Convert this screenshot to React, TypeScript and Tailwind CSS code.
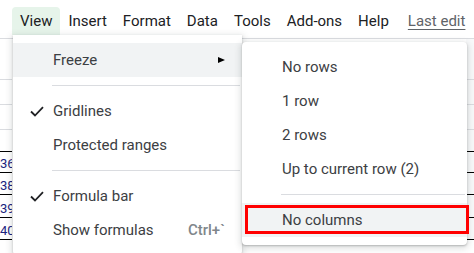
import React from "react";

const font = { fontFamily: "Roboto, 'Noto Sans', Arial, sans-serif" };

const MenuBar: React.FC = () => {
    const items = ["Insert", "Format", "Data", "Tools", "Add-ons", "Help"];
    return (
        <div className="flex items-end h-[35px] pl-[12px] text-[15px] text-[#202124]">
            <div className="h-[28px] px-2 flex items-center bg-[#e6f4ea] rounded-t-[4px]">View</div>
            {items.map((it) => (
                <div key={it} className="h-[28px] px-2 flex items-center">{it}</div>
            ))}
            <div className="h-[28px] ml-[11px] flex items-center text-[#5f6368] underline underline-offset-[3px]">Last edit</div>
        </div>
    );
};

const Check: React.FC = () => (
    <svg width="14" height="11" viewBox="0 0 14 11" className="absolute left-[17px] top-[12px]">
        <path d="M1 5.5 L5 9.5 L13 1.2" fill="none" stroke="#202124" strokeWidth="1.8" />
    </svg>
);

type Item = { label: string; checked?: boolean; arrow?: boolean; shortcut?: string; active?: boolean };

const Row: React.FC<{ item: Item }> = ({ item }) => (
    <div className={`relative h-[34px] flex items-center pl-[40px] pr-[16px] text-[15px] text-[#3c4043] ${item.active ? "bg-[#f1f3f4]" : ""}`}>
        {item.checked && <Check />}
        <span className="flex-1">{item.label}</span>
        {item.arrow && (
            <svg width="7" height="6" viewBox="0 0 7 6" className="mr-[1px]">
                <path d="M0 0 L7 3 L0 6 Z" fill="#000" />
            </svg>
        )}
        {item.shortcut && <span className="text-[#80868b] font-medium mr-[1px]">{item.shortcut}</span>}
    </div>
);

const Sep: React.FC = () => (
    <div className="my-[8px] ml-[39px] mr-[2px] h-px bg-[#dadce0]" />
);

const ViewMenu: React.FC = () => (
    <div className="absolute left-[13px] top-[35px] w-[229px] bg-white pt-[8px] pb-[8px] rounded-b-[4px] shadow-[0_2px_6px_2px_rgba(60,64,67,0.15),0_1px_2px_rgba(60,64,67,0.3)]">
        <Row item={{ label: "Freeze", arrow: true, active: true }} />
        <Sep />
        <Row item={{ label: "Gridlines", checked: true }} />
        <Row item={{ label: "Protected ranges" }} />
        <Sep />
        <Row item={{ label: "Formula bar", checked: true }} />
        <Row item={{ label: "Show formulas", shortcut: "Ctrl+`" }} />
    </div>
);

const FreezeMenu: React.FC = () => (
    <div className="absolute left-[242px] top-[42px] w-[225px] bg-white pt-[8px] pb-[8px] rounded-[4px] shadow-[0_2px_6px_2px_rgba(60,64,67,0.15),0_1px_2px_rgba(60,64,67,0.3)]">
        <Row item={{ label: "No rows" }} />
        <Row item={{ label: "1 row" }} />
        <Row item={{ label: "2 rows" }} />
        <Row item={{ label: "Up to current row (2)" }} />
        <Sep />
        <div className="relative">
            <Row item={{ label: "No columns", active: true }} />
            <div className="absolute left-[3px] right-[-2px] top-[2px] bottom-[3px] border-[3px] border-[#ff0000]" />
        </div>
    </div>
);

const Sheet: React.FC = () => {
    const rows = [
        { h: 41, line: "#dadce0", n: "" },
        { h: 25, line: "#dadce0", n: "" },
        { h: 25, line: "#dadce0", n: "" },
        { h: 22, line: "#000", n: "" },
        { h: 21, line: "#000", n: "36" },
        { h: 22, line: "#000", n: "38" },
        { h: 23, line: "#000", n: "39" },
        { h: 22, line: "#000", n: "40" },
    ];
    return (
        <div className="flex flex-col border-t border-[#dadce0] mt-[3px]">
            {rows.map((r, i) => (
                <div key={i} className="flex" style={{ height: r.h }}>
                    <div className="w-[12px] flex items-end overflow-hidden border-b text-[13px] leading-[16px] text-[#1a237e]" style={{ borderColor: r.line }}>
                        {r.n}
                    </div>
                    <div className="flex-1" />
                    <div className="w-[8px] bg-[#f8f9fa] border-b" style={{ borderColor: r.line }} />
                </div>
            ))}
        </div>
    );
};

export default function App() {
    return (
        <div className="relative w-[474px] h-[253px] overflow-hidden bg-white" style={font}>
            <MenuBar />
            <Sheet />
            <ViewMenu />
            <FreezeMenu />
        </div>
    );
}
